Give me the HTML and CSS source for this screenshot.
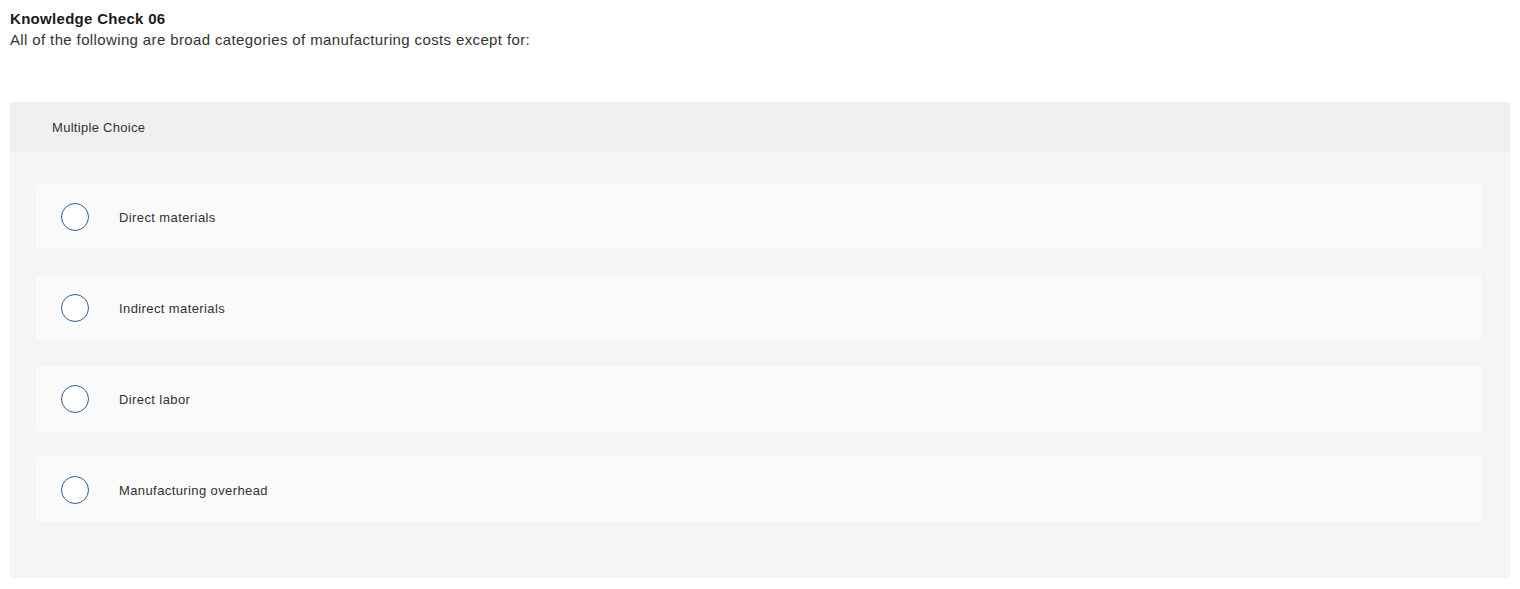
FILE: index.html
```html
<!DOCTYPE html>
<html>
<head>
<meta charset="utf-8">
<link rel="stylesheet" href="styles.css">
</head>
<body>
<div class="page">
  <div class="question">
    <h1 class="title">Knowledge Check 06</h1>
    <p class="prompt">All of the following are broad categories of manufacturing costs except for:</p>
  </div>
  <div class="mc">
    <div class="mc-header">Multiple Choice</div>
    <div class="mc-body">
      <label class="option"><span class="radio"></span><span class="opt-text">Direct materials</span></label>
      <label class="option"><span class="radio"></span><span class="opt-text">Indirect materials</span></label>
      <label class="option"><span class="radio"></span><span class="opt-text">Direct labor</span></label>
      <label class="option"><span class="radio"></span><span class="opt-text">Manufacturing overhead</span></label>
    </div>
  </div>
</div>
</body>
</html>
```
FILE: styles.css
```css
html, body {
  margin: 0;
  padding: 0;
  background: #ffffff;
}
body {
  font-family: "Liberation Sans", Arial, sans-serif;
  color: #222;
}
.page {
  padding: 10px 10px 0 10px;
}
.question {
  height: 92px;
}
.title {
  margin: 0;
  font-size: 15px;
  font-weight: bold;
  line-height: 18px;
  letter-spacing: 0.3px;
  color: #1a1a1a;
}
.prompt {
  margin: 3px 0 0 0;
  font-size: 15px;
  line-height: 18px;
  letter-spacing: 0.37px;
  color: #333;
}
.mc {
  background: #f5f5f5;
  border-radius: 2px;
  height: 476px;
  box-sizing: border-box;
}
.mc-header {
  height: 50px;
  background: #f0f0f0;
  display: flex;
  align-items: center;
  padding-left: 42px;
  font-size: 13px;
  letter-spacing: 0.3px;
  color: #333;
  border-radius: 2px 2px 0 0;
}
.mc-body {
  padding: 32px 28px 0 26px;
  display: flex;
  flex-direction: column;
  gap: 26px;
}
.option {
  height: 65px;
  background: #fafafa;
  border-radius: 3px;
  display: flex;
  align-items: center;
  padding-left: 25px;
}
.radio {
  width: 26px;
  height: 26px;
  border: 1.5px solid #2d5f97;
  border-radius: 50%;
  background: #fff;
  flex: none;
}
.opt-text {
  margin-left: 30px;
  margin-top: 2px;
  font-size: 13px;
  letter-spacing: 0.4px;
  color: #333;
}
```
